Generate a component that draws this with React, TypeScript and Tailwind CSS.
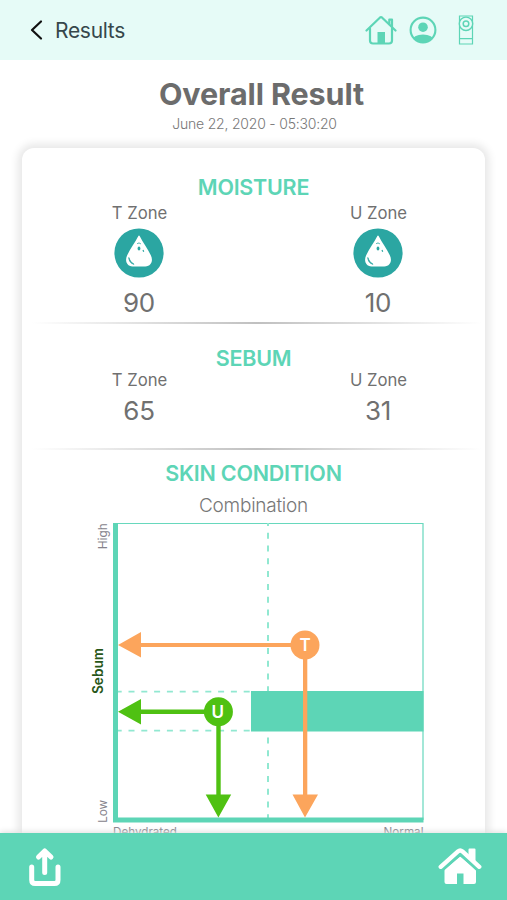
import React from "react";

const MINT = "#5dd5b6";

function HomeOutline() {
  return (
    <svg width="32" height="30" viewBox="0 0 32 30" fill="none" stroke={MINT} strokeWidth="2.2" strokeLinecap="round" strokeLinejoin="round">
      <path d="M1.5 15.5 14.800 2.700q1.200-1 2.400 0L30.500 15.500" />
      <path d="M5 13.500v12a3 3 0 0 0 3 3h16a3 3 0 0 0 3-3v-12" />
      <path d="M24.300 9V4.700H27V12" />
      <path d="M12.500 17h7.500v11h-7.500z" fill={MINT} stroke="none" />
    </svg>
  );
}

function Profile() {
  return (
    <svg width="28" height="28" viewBox="0 0 28 28">
      <defs>
        <clipPath id="profile-clip">
          <circle cx="14" cy="14" r="12.5" />
        </clipPath>
      </defs>
      <circle cx="14" cy="14" r="12.4" fill="none" stroke={MINT} strokeWidth="2.1" />
      <circle cx="14" cy="11.2" r="4.8" fill={MINT} />
      <ellipse cx="14" cy="25" rx="11" ry="6.6" fill={MINT} clipPath="url(#profile-clip)" />
    </svg>
  );
}

function Device() {
  return (
    <svg width="16" height="30" viewBox="0 0 16 30" fill="none" stroke={MINT}>
      <path d="M1.5 1h13v28h-13zM1.5 23.700h13" strokeWidth="1.2" />
      <circle cx="8" cy="8.8" r="6.7" fill="#e6fbf7" strokeWidth="1.4" />
      <circle cx="8" cy="8.8" r="2.8" strokeWidth="1.5" />
    </svg>
  );
}

function Droplet() {
  return (
    <svg className="mx-auto block" width="50" height="50" viewBox="0 0 50 50">
      <circle cx="25" cy="25" r="24.6" fill="#2ba6a2" />
      <path d="M24.200 8.200q.8-1.6 1.6 0C29 14.500 33.500 20.500 36.800 27.200c2.500 5 1 11-5.500 11.400H18.600c-6.500-.4-7.800-6.400-5.400-11.400C16.400 20.500 21 14.500 24.200 8.200Z" fill="#fff" />
      <path d="M14.8 29.5c0 3.3 1.9 6.3 5.3 6.8-2.5-1.5-4.2-3.7-5.3-6.8Z" fill="#2ba6a2" stroke="#2ba6a2" strokeWidth=".7" />
      <path d="M23.2 15.7c1.3-1 2.8-.7 3.7.3" fill="none" stroke="#2ba6a2" strokeWidth=".9" />
      <ellipse cx="25" cy="20.5" rx="1.4" ry="2.1" fill="#2ba6a2" />
      <path d="m29 22 .7 1.8" stroke="#2ba6a2" strokeWidth="1.2" />
    </svg>
  );
}

function Heading({ children }: { children: React.ReactNode }) {
  return <h2 className="h-[26px] text-center text-[21.5px] leading-[26px] font-semibold tracking-[-0.25px] text-[#5dd5b6]">{children}</h2>;
}

function Zone({ name, value, icon }: { name: string; value: number; icon?: boolean }) {
  return (
    <div className="w-[120px] text-center text-[#707070]">
      <div className="h-6 pl-px text-[16.7px] leading-6">{name}</div>
      {icon && <div className="mt-[3px] h-[59px]"><Droplet /></div>}
      <div className={icon ? "text-[26px] leading-8 tracking-[-0.3px]" : "mt-[3px] text-[26px] leading-8 tracking-[-0.3px]"}>{value}</div>
    </div>
  );
}

function Divider() {
  return <div className="ml-2.5 h-[2.5px] w-[450px] bg-linear-to-r from-transparent via-[#c0c0c0] to-transparent" />;
}

function Chart() {
  return (
    <svg className="ml-[68px] block shrink-0" width="340" height="325" viewBox="90 518 340 325" fontFamily="Inter, sans-serif">
      <path d="M115 523.5H423V820" fill="none" stroke="#67d8bd" strokeWidth="1.2" />
      <path d="M268 523V820" stroke="#91e8d1" strokeWidth="2" strokeDasharray="6 6.8" strokeDashoffset="3.1" />
      <path d="M118 691.7H251M118 730.7H251" stroke="#91e8d1" strokeWidth="1.7" strokeDasharray="6 6.8" strokeDashoffset="2.3" />
      <path d="M251 691H423.5V731.5H251Z" fill={MINT} />
      <path d="M115.5 523V820H423.5" fill="none" stroke={MINT} strokeWidth="5" />
      <g fill="#fca55c" stroke="none">
        <path d="M140 643H305V647H140ZM303 645H307.300V796H303Z" />
        <path d="M118 645 141 632V657.500ZM305 817.500 292.500 794.500H318Z" />
        <circle cx="305" cy="645" r="14.500" />
      </g>
      <g fill="#4fc112">
        <path d="M140 709.500H218V714H140ZM216.300 712H220.700V796H216.300Z" />
        <path d="M118 711.700 141 699V724.500ZM218.400 817.500 205.700 794.500H231.200Z" />
        <circle cx="218.400" cy="711.700" r="14.500" />
      </g>
      <g fill="#fff" fontSize="17" fontWeight="600" textAnchor="middle">
        <text x="305" y="651.300">T</text>
        <text x="217.700" y="718">U</text>
      </g>
      <g textAnchor="middle" fill="#85838b" fontSize="12">
        <text transform="translate(106.500 536.300) rotate(-90)" textLength="26" lengthAdjust="spacingAndGlyphs">High</text>
        <text transform="translate(106.500 811.300) rotate(-90)" textLength="23" lengthAdjust="spacingAndGlyphs">Low</text>
      </g>
      <text transform="translate(103.300 671) rotate(-90)" textAnchor="middle" fontSize="14" fontWeight="600" fill="#285719" textLength="46" lengthAdjust="spacingAndGlyphs">Sebum</text>
      <g fill="#85838b" fontSize="11.500">
        <text x="113" y="836" textLength="64" lengthAdjust="spacingAndGlyphs">Dehydrated</text>
        <text x="383.500" y="836" textLength="40" lengthAdjust="spacingAndGlyphs">Normal</text>
      </g>
    </svg>
  );
}

export default function App() {
  return (
    <div className="flex h-[900px] w-[507px] flex-col overflow-hidden bg-white font-['Inter',sans-serif]">
      <header className="flex h-[60px] shrink-0 items-center bg-[#e6fbf7] pl-[29px]">
        <svg width="14" height="22" viewBox="0 0 14 22" fill="none" stroke="#111" strokeWidth="2.2" strokeLinecap="round" strokeLinejoin="round">
          <path d="M12 2.500 3 11l9 8.500" />
        </svg>
        <div className="mt-px ml-3 w-[310px] text-[21px] leading-7 tracking-[-0.3px] text-[#36474b]">Results</div>
        <HomeOutline />
        <div className="ml-[11.5px]"><Profile /></div>
        <div className="ml-[21.5px]"><Device /></div>
      </header>

      <main className="h-[773px] shrink-0 overflow-hidden">
        <h1 className="mt-4 ml-4 text-center text-[30.5px] leading-9 font-bold tracking-[-0.1px] text-[#6c6c6c]">Overall Result</h1>
        <p className="mt-0.5 ml-0.5 h-5 text-center text-[14px] leading-5 font-light tracking-[-0.2px] text-[#777]">June 22, 2020 - 05:30:20</p>
        <section className="mt-3.5 ml-[22px] h-[750px] w-[463px] rounded-xl bg-white pt-[26px] shadow-[0_0_9px_4px_#e7e7e7]">
          <Heading>MOISTURE</Heading>
          <div className="mt-px ml-[57px] flex h-[120.5px] gap-[119px]">
            <Zone name="T Zone" value={90} icon />
            <Zone name="U Zone" value={10} icon />
          </div>
          <Divider />
          <div className="mt-[21px]"><Heading>SEBUM</Heading></div>
          <div className="-mt-[3px] ml-[57px] flex h-[79.5px] gap-[119px]">
            <Zone name="T Zone" value={65} />
            <Zone name="U Zone" value={31} />
          </div>
          <Divider />
          <div className="mt-2.5"><Heading>SKIN CONDITION</Heading></div>
          <p className="mt-2 h-6 text-center text-[19px] leading-6 font-light tracking-[-0.25px] text-[#777]">Combination</p>
          <Chart />
        </section>
      </main>

      <footer className="flex h-[67px] shrink-0 items-center justify-between bg-[#5dd5b6] pr-[25px] pl-[27px] shadow-[0_-1px_6px_#ddd]">
        <svg width="36" height="42" viewBox="0 0 36 42" fill="none" stroke="#fff" strokeWidth="5" strokeLinecap="round" strokeLinejoin="round">
          <path d="M17.700 26.500V5M11.500 11l6.200-6L24 11M4.700 21v13q0 3.500 3.500 3.500H27.500q3.500 0 3.500-3.500V21" />
        </svg>
        <svg className="mb-0.5" width="44" height="38" viewBox="0 0 44 38">
          <path d="M30.500 2.500q0-1 1-1h5q1 0 1 1V16l-7-6.300ZM22.200 9.500 38 22.500V35q0 2-2 2H25.500V26.500H19V37H8.500q-2 0-2-2V22.500Z" fill="#fff" />
          <path d="m5 23.500 15.700-14q1.500-1.400 3 0L39 23.500" fill="none" stroke={MINT} strokeWidth="1.500" />
          <path d="M2.700 19.800 20 4.400q2.200-2 4.400 0L41.300 19.800" fill="none" stroke="#fff" strokeWidth="4.300" strokeLinecap="round" />
        </svg>
      </footer>
    </div>
  );
}
